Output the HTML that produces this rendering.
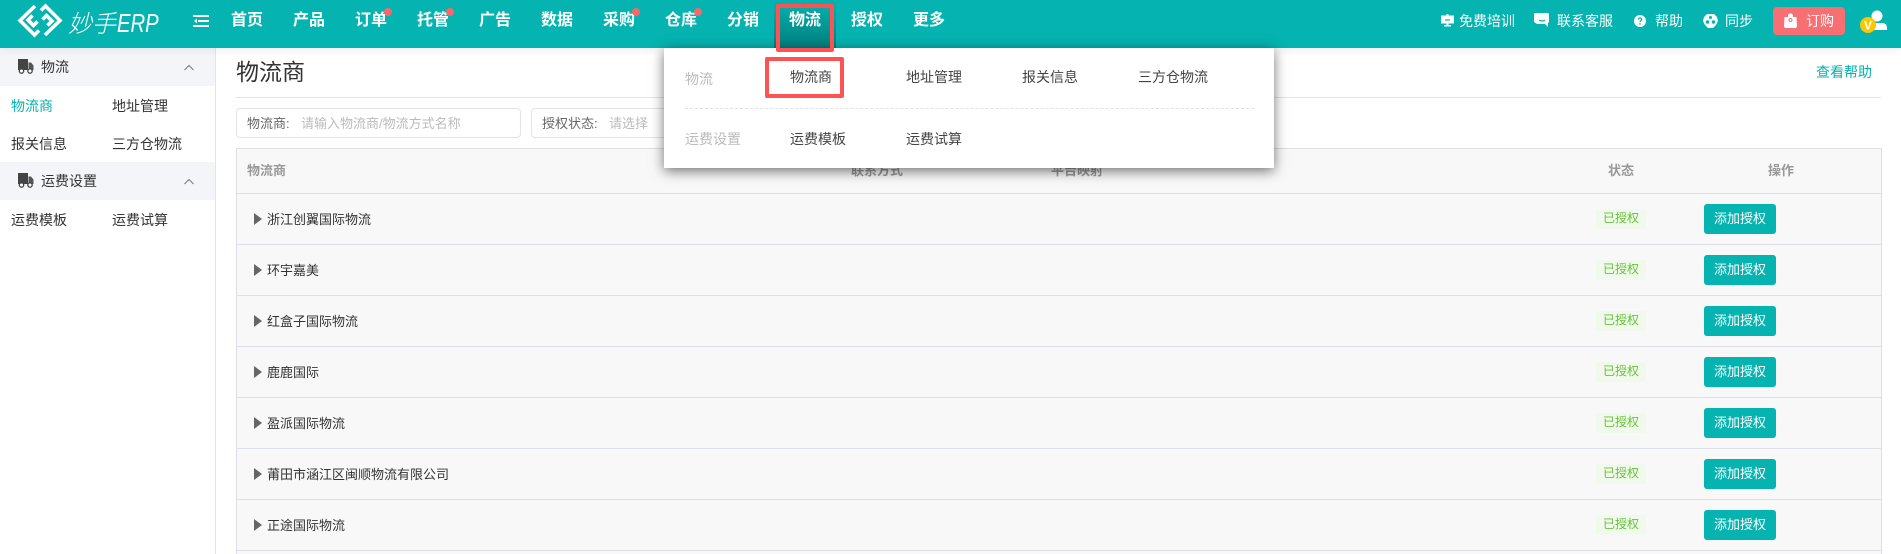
<!DOCTYPE html>
<html lang="zh"><head><meta charset="utf-8"><title>物流商</title>
<style>
*{box-sizing:border-box}
html,body{margin:0;padding:0;width:1901px;height:554px;overflow:hidden;background:#fff}
body{font-family:"Liberation Sans","Noto Sans CJK SC",sans-serif;font-size:14px;color:#333;position:relative}
.a{position:absolute;white-space:nowrap;line-height:20px}
.hd{position:absolute;left:0;top:0;width:1901px;height:48px;background:#05b3b0;box-shadow:0 2px 8px rgba(0,0,0,.07)}
.nav{position:absolute;top:11px;line-height:20px;font-size:16px;font-weight:700;color:#fff;white-space:nowrap}
.dot{position:absolute;top:8px;width:8px;height:8px;border-radius:50%;background:#f5696c}
.rt{position:absolute;top:11px;line-height:20px;font-size:14px;color:#fff;white-space:nowrap}
.side{position:absolute;left:0;top:48px;width:216px;height:506px;background:#fff;border-right:1px solid #e2e4ea}
.sh{position:absolute;left:0;width:215px;height:38px;background:#f4f5f9}
.si{position:absolute;line-height:20px;white-space:nowrap;color:#333}
.inp{position:absolute;top:108px;height:30px;width:285px;border:1px solid #e1e3ea;border-radius:4px;background:#fff}
.tb{position:absolute;left:236px;top:148px;width:1646px;height:406px;background:#f8f8f9;border:1px solid #dcdfe8;border-bottom:none}
.ln{position:absolute;left:236px;width:1645px;height:1px;background:#dfe1ea}
.th{position:absolute;top:161px;line-height:20px;font-size:13px;font-weight:700;color:#999;white-space:nowrap}
.tri{position:absolute;left:254px;width:0;height:0;border-left:8px solid #666;border-top:6px solid transparent;border-bottom:6px solid transparent}
.nm{position:absolute;left:267px;font-size:13px;line-height:20px;color:#333;white-space:nowrap}
.tag{position:absolute;left:1596px;width:50px;height:20px;line-height:19px;background:#f0f9eb;color:#67c23a;font-size:12px;text-align:center;border-radius:3px}
.btn{position:absolute;left:1704px;width:72px;height:30px;line-height:30px;background:#05b3b0;color:#fff;font-size:13px;text-align:center;border-radius:3px}
.dd{position:absolute;left:664px;top:48px;width:610px;height:120px;background:#fff;box-shadow:0 3px 12px rgba(0,0,0,.55)}
.redbox{position:absolute;border:4px solid #fd5355;border-radius:2px}
</style></head><body>

<div class="side"></div>
<div class="sh" style="top:48px"></div>
<svg class="a" style="left:18px;top:59px" width="16" height="15" viewBox="0 0 16 15"><rect x="0" y="0" width="10" height="11" fill="#444"/><path d="M10.500 3.500h2.500l2.500 3v4.500h-5z" fill="#555"/><circle cx="3.500" cy="12" r="2.200" fill="#fff" stroke="#444" stroke-width="1.300"/><circle cx="12" cy="12" r="2.200" fill="#fff" stroke="#444" stroke-width="1.300"/></svg>
<div class="si" style="left:41px;top:57px">物流</div>
<svg class="a" style="left:184px;top:64px" width="10" height="7" viewBox="0 0 10 7"><path d="M.5 6l4.500-4.500L9.500 6" fill="none" stroke="#777" stroke-width="1"/></svg>
<div class="si" style="left:11px;top:96px;color:#05b3b0">物流商</div>
<div class="si" style="left:112px;top:96px">地址管理</div>
<div class="si" style="left:11px;top:134px">报关信息</div>
<div class="si" style="left:112px;top:134px">三方仓物流</div>
<div class="sh" style="top:162px"></div>
<svg class="a" style="left:18px;top:173px" width="16" height="15" viewBox="0 0 16 15"><rect x="0" y="0" width="10" height="11" fill="#444"/><path d="M10.500 3.500h2.500l2.500 3v4.500h-5z" fill="#555"/><circle cx="3.500" cy="12" r="2.200" fill="#fff" stroke="#444" stroke-width="1.300"/><circle cx="12" cy="12" r="2.200" fill="#fff" stroke="#444" stroke-width="1.300"/></svg>
<div class="si" style="left:41px;top:171px">运费设置</div>
<svg class="a" style="left:184px;top:178px" width="10" height="7" viewBox="0 0 10 7"><path d="M.5 6l4.500-4.500L9.500 6" fill="none" stroke="#777" stroke-width="1"/></svg>
<div class="si" style="left:11px;top:210px">运费模板</div>
<div class="si" style="left:112px;top:210px">运费试算</div>

<div class="a" style="left:236px;top:57px;font-size:23px;line-height:30px;color:#333">物流商</div>
<div class="a" style="left:1816px;top:62px;color:#05b3b0">查看帮助</div>
<div class="ln" style="top:97px;background:#e1e3e8"></div>

<div class="inp" style="left:236px"></div>
<div class="a" style="left:247px;top:114px;font-size:13px;color:#666">物流商:</div>
<div class="a" style="left:301px;top:114px;font-size:13px;color:#bbb">请输入物流商/物流方式名称</div>
<div class="inp" style="left:531px"></div>
<div class="a" style="left:542px;top:114px;font-size:13px;color:#666">授权状态:</div>
<div class="a" style="left:609px;top:114px;font-size:13px;color:#bbb">请选择</div>

<div class="tb"></div>
<div class="ln" style="top:193px"></div><div class="ln" style="top:244px"></div><div class="ln" style="top:295px"></div><div class="ln" style="top:346px"></div><div class="ln" style="top:397px"></div><div class="ln" style="top:448px"></div><div class="ln" style="top:499px"></div><div class="ln" style="top:550px"></div>
<div class="th" style="left:247px">物流商</div>
<div class="th" style="left:851px">联系方式</div>
<div class="th" style="left:1051px">平台映射</div>
<div class="th" style="left:1608px">状态</div>
<div class="th" style="left:1768px">操作</div>

<div class="tri" style="top:213px"></div><div class="nm" style="top:210px">浙江创翼国际物流</div><div class="tag" style="top:209px">已授权</div><div class="btn" style="top:204px">添加授权</div>
<div class="tri" style="top:264px"></div><div class="nm" style="top:261px">环宇嘉美</div><div class="tag" style="top:260px">已授权</div><div class="btn" style="top:255px">添加授权</div>
<div class="tri" style="top:315px"></div><div class="nm" style="top:312px">红盒子国际物流</div><div class="tag" style="top:311px">已授权</div><div class="btn" style="top:306px">添加授权</div>
<div class="tri" style="top:366px"></div><div class="nm" style="top:363px">鹿鹿国际</div><div class="tag" style="top:362px">已授权</div><div class="btn" style="top:357px">添加授权</div>
<div class="tri" style="top:417px"></div><div class="nm" style="top:414px">盈派国际物流</div><div class="tag" style="top:413px">已授权</div><div class="btn" style="top:408px">添加授权</div>
<div class="tri" style="top:468px"></div><div class="nm" style="top:465px">莆田市涵江区闽顺物流有限公司</div><div class="tag" style="top:464px">已授权</div><div class="btn" style="top:459px">添加授权</div>
<div class="tri" style="top:519px"></div><div class="nm" style="top:516px">正途国际物流</div><div class="tag" style="top:515px">已授权</div><div class="btn" style="top:510px">添加授权</div>

<div class="hd"></div>
<svg class="a" style="left:0;top:0" width="70" height="44" viewBox="0 0 70 44"><g fill="none" stroke="#fff" stroke-width="3.600" stroke-linejoin="miter" stroke-linecap="butt"><path d="M35 6L20 20.500 34.500 35 39 30.500"/><path d="M32.500 15.500L28 20 33.500 25.500 37.500 21.500"/><path d="M45 35L60 20.500 45.500 6 41 10.500"/><path d="M47.500 25.500L52 21 46.500 15.500 42.500 19.500"/></g></svg>
<div class="a" style="left:68px;top:6px;font-size:24px;line-height:34px;color:#fff;font-style:italic;font-weight:300">妙手<span style="display:inline-block;font-size:26px;transform:scaleX(.78);transform-origin:0 50%;margin-left:1px">ERP</span></div>
<svg class="a" style="left:193px;top:15px" width="16" height="12" viewBox="0 0 16 12"><path d="M0 1h16M5 6h11M0 11h16" stroke="#fff" stroke-width="2"/><path d="M4 3.500L1 6l3 2.500z" fill="#fff"/></svg>

<div class="a" style="left:774px;top:0;width:62px;height:48px;background:linear-gradient(#05b3b0,#00807e)"></div>
<div class="nav" style="left:231px">首页</div>
<div class="nav" style="left:293px">产品</div>
<div class="nav" style="left:355px">订单</div><div class="dot" style="left:384px"></div>
<div class="nav" style="left:417px">托管</div><div class="dot" style="left:446px"></div>
<div class="nav" style="left:479px">广告</div>
<div class="nav" style="left:541px">数据</div>
<div class="nav" style="left:603px">采购</div><div class="dot" style="left:632px"></div>
<div class="nav" style="left:665px">仓库</div><div class="dot" style="left:694px"></div>
<div class="nav" style="left:727px">分销</div>
<div class="nav" style="left:789px">物流</div>
<div class="nav" style="left:851px">授权</div>
<div class="nav" style="left:913px">更多</div>

<svg class="a" style="left:1441px;top:14px" width="13" height="13" viewBox="0 0 13 13"><path d="M5.500 0h2v1.500H13v8H7.500V11h2.500v1.500H3V11h2.500V9.500H0v-8h5.500z" fill="#fff"/><path d="M4 6h5" stroke="#05b3b0" stroke-width="1.200"/></svg>
<div class="rt" style="left:1459px">免费培训</div>
<svg class="a" style="left:1534px;top:13px" width="16" height="15" viewBox="0 0 16 15"><path d="M1 0h13l1 1v8l-1 1v4l-3-3H3L0 9V1z" fill="#fff"/><path d="M5 7q3 2 6 0" fill="none" stroke="#05b3b0" stroke-width="1.200"/></svg>
<div class="rt" style="left:1557px">联系客服</div>
<svg class="a" style="left:1634px;top:15px" width="12" height="12" viewBox="0 0 12 12"><circle cx="6" cy="6" r="6" fill="#fff"/><path d="M4.300 4.700Q4.500 3 6 3t1.700 1.500Q7.700 5.300 6.800 5.800 6 6.300 6 7.300" fill="none" stroke="#05b3b0" stroke-width="1.200"/><circle cx="6" cy="9" r=".8" fill="#05b3b0"/></svg>
<div class="rt" style="left:1655px">帮助</div>
<svg class="a" style="left:1703px;top:14px" width="15" height="14" viewBox="0 0 15 14"><path d="M4 0h7l3 3 1 4-2 4-3 3H5L2 11 0 7l1-4z" fill="#fff"/><circle cx="4.500" cy="8" r="1.800" fill="#05b3b0"/><circle cx="10.500" cy="8" r="1.800" fill="#05b3b0"/><circle cx="7.500" cy="3.500" r="1.500" fill="#05b3b0"/></svg>
<div class="rt" style="left:1725px">同步</div>
<div class="a" style="left:1773px;top:7px;width:72px;height:28px;background:#f76f72;border-radius:4px"></div>
<svg class="a" style="left:1784px;top:13px" width="13" height="15" viewBox="0 0 13 15"><path d="M4 4V3q0-2.500 2.500-2.500T9 3v1h3.500l.5 9.500-1 1.500H1L0 13.500.5 4z" fill="#fff"/><circle cx="6.500" cy="7" r="1.500" fill="none" stroke="#f76f72"/></svg>
<div class="rt" style="left:1806px">订购</div>
<svg class="a" style="left:1858px;top:8px" width="32" height="28" viewBox="0 0 32 28"><circle cx="19" cy="8" r="5.500" fill="#fff"/><path d="M14 22v-4q0-3 3-3h7q5 0 5 5v2z" fill="#fff"/><circle cx="10" cy="17" r="8" fill="#fbc702"/><text x="10" y="21.500" font-family="Liberation Sans" font-size="12" font-weight="700" fill="#fff" text-anchor="middle">V</text></svg>

<div class="dd"></div>
<div class="a" style="left:685px;top:69px;color:#bbb">物流</div>
<div class="a" style="left:790px;top:67px;color:#444">物流商</div>
<div class="a" style="left:906px;top:67px;color:#444">地址管理</div>
<div class="a" style="left:1022px;top:67px;color:#444">报关信息</div>
<div class="a" style="left:1138px;top:67px;color:#444">三方仓物流</div>
<div class="a" style="left:685px;top:108px;width:569px;height:0;border-top:1px dashed #e2e2e2"></div>
<div class="a" style="left:685px;top:129px;color:#bbb">运费设置</div>
<div class="a" style="left:790px;top:129px;color:#444">运费模板</div>
<div class="a" style="left:906px;top:129px;color:#444">运费试算</div>
<div class="redbox" style="left:765px;top:57px;width:79px;height:41px"></div>
<div class="redbox" style="left:776px;top:4px;width:58px;height:48px"></div>

</body></html>
